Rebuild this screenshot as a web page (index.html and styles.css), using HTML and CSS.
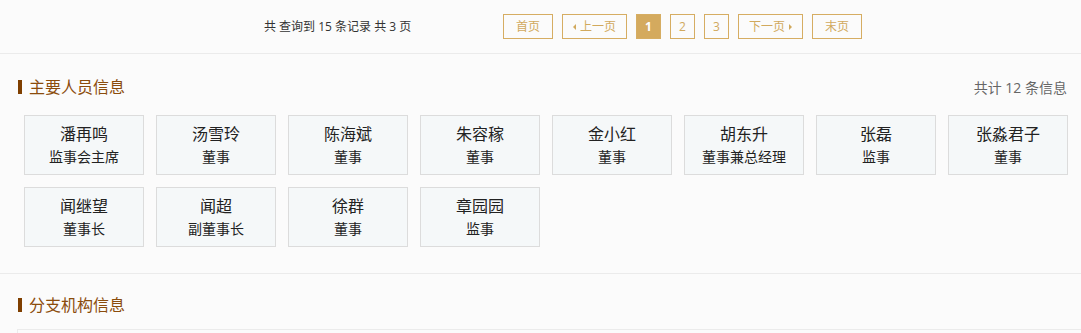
FILE: index.html
```html
<!DOCTYPE html>
<html lang="zh-CN">
<head>
<meta charset="utf-8">
<link rel="stylesheet" href="styles.css">
</head>
<body>
<div class="pager">
  <span class="pager-info">共 查询到 15 条记录 共 3 页</span>
  <div class="pager-btns">
    <a class="pbtn w50">首页</a>
    <a class="pbtn w65"><span class="tri tri-l"></span>上一页</a>
    <a class="pbtn w25 active">1</a>
    <a class="pbtn w25">2</a>
    <a class="pbtn w25">3</a>
    <a class="pbtn w65">下一页<span class="tri tri-r"></span></a>
    <a class="pbtn w50">末页</a>
  </div>
</div>

<section class="sec sec-people">
  <div class="sec-head">
    <h2 class="sec-title">主要人员信息</h2>
    <span class="sec-count">共计 12 条信息</span>
  </div>
  <div class="cards">
    <div class="card"><div class="name">潘再鸣</div><div class="role">监事会主席</div></div>
    <div class="card"><div class="name">汤雪玲</div><div class="role">董事</div></div>
    <div class="card"><div class="name">陈海斌</div><div class="role">董事</div></div>
    <div class="card"><div class="name">朱容稼</div><div class="role">董事</div></div>
    <div class="card"><div class="name">金小红</div><div class="role">董事</div></div>
    <div class="card"><div class="name">胡东升</div><div class="role">董事兼总经理</div></div>
    <div class="card"><div class="name">张磊</div><div class="role">监事</div></div>
    <div class="card"><div class="name">张淼君子</div><div class="role">董事</div></div>
    <div class="card"><div class="name">闻继望</div><div class="role">董事长</div></div>
    <div class="card"><div class="name">闻超</div><div class="role">副董事长</div></div>
    <div class="card"><div class="name">徐群</div><div class="role">董事</div></div>
    <div class="card"><div class="name">章园园</div><div class="role">监事</div></div>
  </div>
</section>

<section class="sec sec-branch">
  <div class="sec-head">
    <h2 class="sec-title">分支机构信息</h2>
  </div>
  <div class="branch-box"></div>
</section>
</body>
</html>
```

FILE: styles.css
```css
html, body {
  margin: 0;
  padding: 0;
  background: #fbfbfb;
  font-family: "Open Sans", "Noto Sans CJK SC", sans-serif;
  color: #333;
  overflow: hidden;
}

.pager {
  height: 53px;
  border-bottom: 1px solid #ebebeb;
  display: flex;
  align-items: flex-start;
  padding-left: 264px;
}
.pager-info {
  font-size: 12px;
  line-height: 25px;
  margin-top: 14px;
  color: #333;
  width: 239px;
}
.pager-btns {
  display: flex;
  gap: 9px;
  margin-top: 14px;
}
.pbtn {
  box-sizing: border-box;
  height: 25px;
  border: 1px solid #d6ad62;
  color: #d1a95d;
  font-size: 12px;
  line-height: 23px;
  text-align: center;
  display: flex;
  align-items: center;
  justify-content: center;
  gap: 4px;
  cursor: pointer;
}
.w50 { width: 50px; }
.w65 { width: 65px; }
.w25 { width: 25px; }
.pbtn.active {
  background: #d4aa5e;
  color: #fff;
  font-weight: bold;
}
.tri {
  width: 0;
  height: 0;
  border-top: 3px solid transparent;
  border-bottom: 3px solid transparent;
}
.tri-l { border-right: 3px solid #d1a95d; }
.tri-r { border-left: 3px solid #d1a95d; }

.sec {
  border-bottom: 1px solid #ebebeb;
}
.sec-people {
  padding: 24px 0 26px 0;
}
.sec-head {
  display: flex;
  align-items: center;
  justify-content: space-between;
  padding: 0 14px 0 18px;
  height: 18px;
}
.sec-title {
  margin: 0;
  font-size: 16px;
  font-weight: normal;
  color: #8b4c0c;
  line-height: 18px;
  display: flex;
  align-items: center;
}
.sec-title::before {
  content: "";
  width: 4px;
  height: 14px;
  background: #7f3f00;
  margin-right: 7px;
}
.sec-count {
  font-size: 14px;
  color: #666;
}

.cards {
  display: grid;
  grid-template-columns: repeat(8, 120px);
  grid-auto-rows: 60px;
  gap: 12px;
  margin: 19px 0 0 24px;
}
.card {
  box-sizing: border-box;
  background: #f5f8f9;
  border: 1px solid #dcdcdc;
  text-align: center;
  padding-top: 7px;
}
.name {
  font-size: 16px;
  line-height: 22px;
  color: #222;
}
.role {
  font-size: 14px;
  line-height: 20px;
  margin-top: 2px;
  color: #222;
}

.sec-branch {
  border-bottom: none;
  padding-top: 22px;
}
.branch-box {
  margin: 15px 0 0 17px;
  height: 40px;
  border-top: 1px solid #ebebeb;
  border-left: 1px solid #ebebeb;
}
```
